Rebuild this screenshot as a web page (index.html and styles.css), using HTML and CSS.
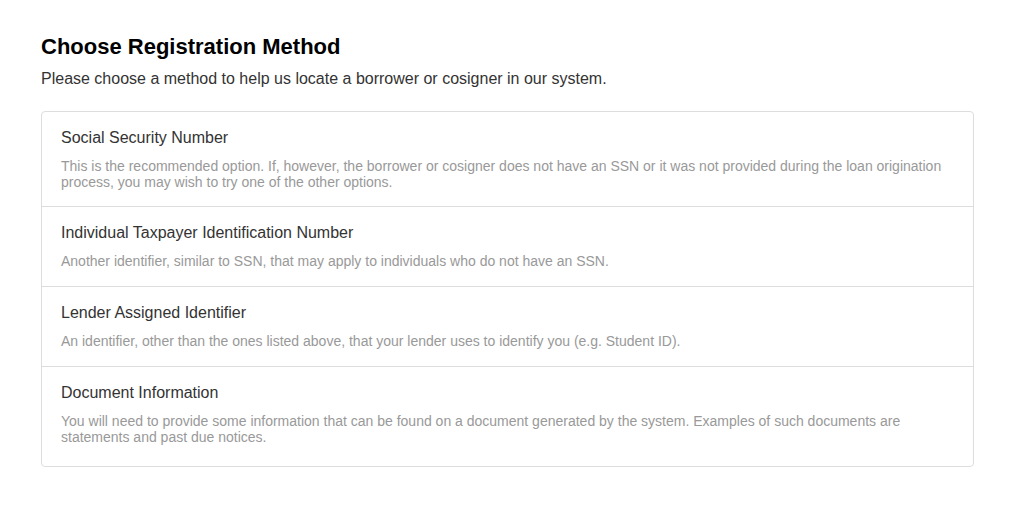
FILE: index.html
```html
<!DOCTYPE html>
<html>
<head>
<meta charset="utf-8">
<link rel="stylesheet" href="styles.css">
</head>
<body>
<main class="page">
  <h1 class="title">Choose Registration Method</h1>
  <p class="intro">Please choose a method to help us locate a borrower or cosigner in our system.</p>
  <ul class="methods">
    <li class="method">
      <div class="method-name">Social Security Number</div>
      <div class="method-desc">This is the recommended option. If, however, the borrower or cosigner does not have an SSN or it was not provided during the loan origination process, you may wish to try one of the other options.</div>
    </li>
    <li class="method">
      <div class="method-name">Individual Taxpayer Identification Number</div>
      <div class="method-desc">Another identifier, similar to SSN, that may apply to individuals who do not have an SSN.</div>
    </li>
    <li class="method">
      <div class="method-name">Lender Assigned Identifier</div>
      <div class="method-desc">An identifier, other than the ones listed above, that your lender uses to identify you (e.g. Student ID).</div>
    </li>
    <li class="method">
      <div class="method-name">Document Information</div>
      <div class="method-desc">You will need to provide some information that can be found on a document generated by the system. Examples of such documents are statements and past due notices.</div>
    </li>
  </ul>
</main>
</body>
</html>
```

FILE: styles.css
```css
html, body {
  margin: 0;
  padding: 0;
  background: #fff;
}
body {
  font-family: "Liberation Sans", Arial, sans-serif;
  color: #333;
}
.page {
  padding: 33px 52px 0 41px;
}
.title {
  margin: 0;
  font-size: 22px;
  line-height: 28px;
  font-weight: bold;
  color: #000;
}
.intro {
  margin: 7px 0 0;
  font-size: 16px;
  line-height: 22px;
  color: #333;
}
.methods {
  list-style: none;
  margin: 21px 0 0;
  padding: 0;
  border: 1px solid #ddd;
  border-radius: 4px;
}
.method {
  padding: 15px 19px 17px;
  border-top: 1px solid #ddd;
}
.method:first-child {
  border-top: none;
  padding-bottom: 16px;
}
.method:last-child {
  padding-bottom: 21px;
}
.method-name {
  font-size: 16px;
  line-height: 22px;
  color: #333;
}
.method-desc {
  margin-top: 9px;
  font-size: 14px;
  line-height: 16px;
  color: #999;
}
```
